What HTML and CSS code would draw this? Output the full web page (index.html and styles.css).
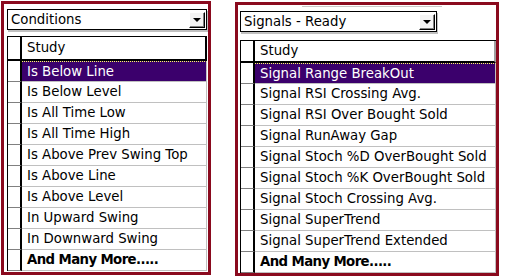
FILE: index.html
```html
<!DOCTYPE html>
<html lang="en">
<head>
  <meta charset="UTF-8">
  <title>Studies</title>
  <link rel="stylesheet" href="styles.css">
</head>
<body>

  <div class="page">

    <div class="panel conditions">
      <div class="combo">
        <span class="combo-text">Conditions</span>
        <span class="combo-btn"><span class="arrow"></span></span>
      </div>
      <div class="grid">
        <div class="row head"><div class="sel"></div><div class="cell">Study</div></div>
        <div class="row current"><div class="sel"></div><div class="cell">Is Below Line</div></div>
        <div class="row"><div class="sel"></div><div class="cell">Is Below Level</div></div>
        <div class="row"><div class="sel"></div><div class="cell">Is All Time Low</div></div>
        <div class="row"><div class="sel"></div><div class="cell">Is All Time High</div></div>
        <div class="row"><div class="sel"></div><div class="cell">Is Above Prev Swing Top</div></div>
        <div class="row"><div class="sel"></div><div class="cell">Is Above Line</div></div>
        <div class="row"><div class="sel"></div><div class="cell">Is Above Level</div></div>
        <div class="row"><div class="sel"></div><div class="cell">In Upward Swing</div></div>
        <div class="row"><div class="sel"></div><div class="cell">In Downward Swing</div></div>
        <div class="row more"><div class="sel"></div><div class="cell">And Many More.....</div></div>
      </div>
    </div>

    <div class="panel signals">
      <div class="combo-line"></div>
      <div class="combo">
        <span class="combo-text">Signals - Ready</span>
        <span class="combo-btn"><span class="arrow"></span></span>
      </div>
      <div class="grid">
        <div class="row head"><div class="sel"></div><div class="cell">Study</div></div>
        <div class="row current"><div class="sel"></div><div class="cell">Signal Range BreakOut</div></div>
        <div class="row"><div class="sel"></div><div class="cell">Signal RSI Crossing Avg.</div></div>
        <div class="row"><div class="sel"></div><div class="cell">Signal RSI Over Bought Sold</div></div>
        <div class="row"><div class="sel"></div><div class="cell">Signal RunAway Gap</div></div>
        <div class="row"><div class="sel"></div><div class="cell">Signal Stoch %D OverBought Sold</div></div>
        <div class="row"><div class="sel"></div><div class="cell">Signal Stoch %K OverBought Sold</div></div>
        <div class="row"><div class="sel"></div><div class="cell">Signal Stoch Crossing Avg.</div></div>
        <div class="row"><div class="sel"></div><div class="cell">Signal SuperTrend</div></div>
        <div class="row"><div class="sel"></div><div class="cell">Signal SuperTrend Extended</div></div>
        <div class="row more"><div class="sel"></div><div class="cell">And Many More.....</div></div>
      </div>
    </div>

  </div>

</body>
</html>
```

FILE: styles.css
```css
body {
  margin: 0;
  background: #fff;
  font-family: 'DejaVu Sans', Verdana, sans-serif;
  font-size: 13.3px;
  color: #000;
}

.page {
  display: flex;
  align-items: flex-start;
  gap: 24px;
  padding: 1px 0 0 1px;
}

.panel {
  box-sizing: border-box;
  height: 274px;
  border: 3px solid #8a0a1e;
  overflow: hidden;
  display: flex;
  flex-direction: column;
}

.conditions {
  width: 210px;
  padding: 5px 1px 0 3px;
}

.signals {
  width: 264px;
  margin-top: 1px;
  padding: 0 0 0 2px;
}

.combo-line {
  height: 1px;
  margin: 1px 0 0 62px;
  width: 140px;
  background: #c8c8c8;
}

.signals .combo {
  margin-top: 4px;
  width: 197px;
}

.combo {
  box-sizing: border-box;
  height: 21px;
  border: 1px solid #000;
  box-shadow: 1px 2px 0 #c0c0c0;
  background: #fff;
  display: flex;
  align-items: center;
  justify-content: space-between;
}

.combo-text {
  padding-left: 3px;
}

.combo-btn {
  box-sizing: border-box;
  width: 16px;
  height: 16px;
  margin-right: 1px;
  border: 1px solid;
  border-color: #fff #000 #000 #fff;
  box-shadow: inset -1px -1px 0 #808080;
  background: #f4f4f4;
  display: flex;
  align-items: center;
  justify-content: center;
}

.arrow {
  width: 0;
  height: 0;
  border-left: 4px solid transparent;
  border-right: 4px solid transparent;
  border-top: 4px solid #000;
  margin: 1px 1px 0 0;
}

.grid {
  margin-top: 6px;
  border-top: 1px solid #000;
  border-left: 1px solid #000;
}

.signals .grid {
  margin-top: 8px;
}

.row {
  display: flex;
  height: 21px;
}

.sel {
  box-sizing: border-box;
  width: 14px;
  flex-shrink: 0;
  background: #fff;
  border-right: 2px solid #000;
  border-bottom: 1px solid #808080;
}

.cell {
  box-sizing: border-box;
  flex: 1;
  padding-left: 5px;
  line-height: 20px;
  white-space: nowrap;
  border-right: 1px solid #c0c0c0;
  border-bottom: 1px solid #c0c0c0;
}

.head {
  height: 24px;
}

.head .sel {
  border-bottom: 2px solid #000;
}

.head .cell {
  line-height: 22px;
  border-right: 2px solid #000;
  border-bottom: 2px solid #000;
}

.signals .head {
  height: 22px;
}

.signals .head .cell {
  line-height: 20px;
  border-right-color: #a0a0a0;
}

.current .cell {
  background: #3b006c;
  color: #fff;
  border-top: 1px dotted #ffff60;
  line-height: 19px;
}

.more .cell {
  font-weight: bold;
  letter-spacing: -0.6px;
}
```
